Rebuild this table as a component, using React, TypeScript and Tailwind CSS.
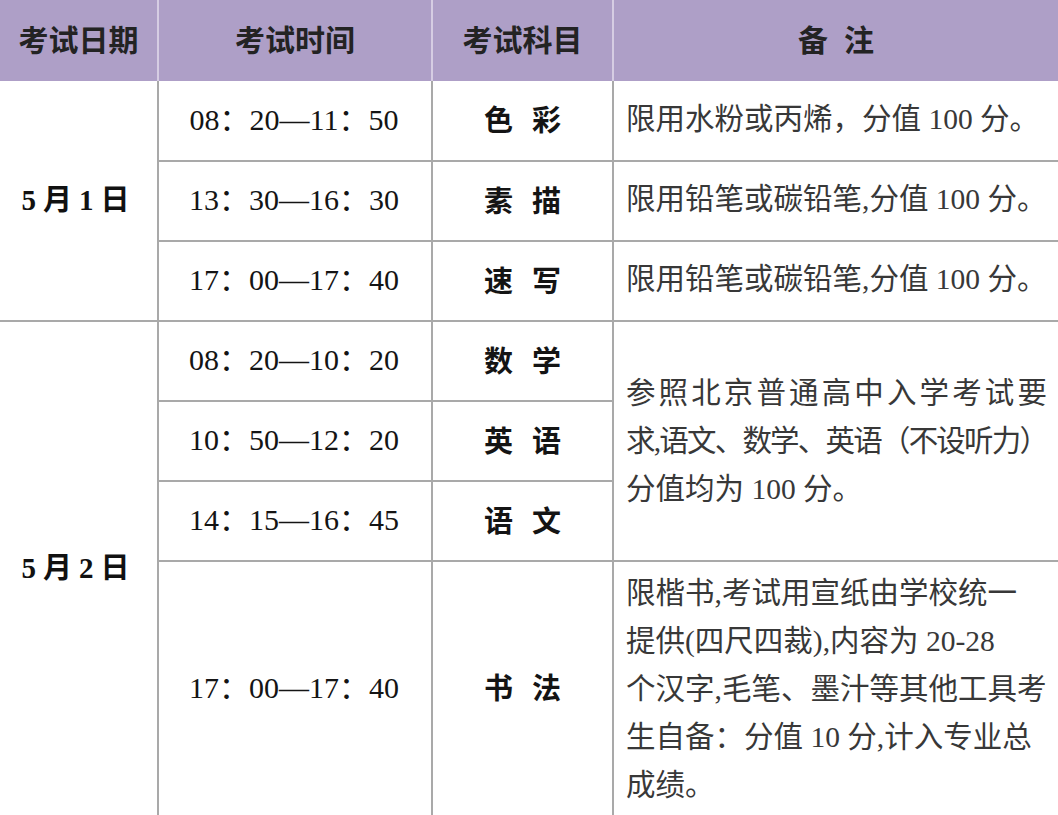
import React from 'react';

const serif = "font-['Liberation_Serif','Noto_Sans_CJK_SC',serif]";
const sans = "font-['Noto_Sans_CJK_SC',sans-serif]";

const line = 'border-[#a9a9a9]';

interface Slot {
    time: string;
    subject: [string, string];
}

const slots: Slot[] = [
    { time: '08：20—11：50', subject: ['色', '彩'] },
    { time: '13：30—16：30', subject: ['素', '描'] },
    { time: '17：00—17：40', subject: ['速', '写'] },
    { time: '08：20—10：20', subject: ['数', '学'] },
    { time: '10：50—12：20', subject: ['英', '语'] },
    { time: '14：15—16：45', subject: ['语', '文'] },
    { time: '17：00—17：40', subject: ['书', '法'] },
];

const rowStart = ['row-start-2', 'row-start-3', 'row-start-4', 'row-start-5', 'row-start-6', 'row-start-7', 'row-start-8'];

const Header: React.FC<{ col: string; last?: boolean; children: React.ReactNode }> = ({ col, last, children }) => (
    <div
        className={`${col} row-start-1 flex items-center justify-center bg-[#ae9fc7] pb-[4px] text-[30px] font-bold text-[#232323] ${sans} ${
            last ? '' : 'border-r-2 border-[#d6cde3]'
        }`}
    >
        {children}
    </div>
);

const Note: React.FC<{ lines: string[]; justify?: boolean[]; tight?: boolean[] }> = ({ lines, justify = [], tight = [] }) => (
    <div className="w-[421px]">
        {lines.map((l, i) => (
            <div
                key={i}
                className={`whitespace-nowrap leading-[48px] ${justify[i] ? 'text-justify [text-align-last:justify]' : ''} ${
                    tight[i] ? 'tracking-[-2px]' : ''
                }`}
            >
                {l}
            </div>
        ))}
    </div>
);

const DateCell: React.FC<{ day: string; className: string }> = ({ day, className }) => (
    <div
        className={`col-start-1 ${className} flex items-center justify-center border-r-2 ${line} pr-[6px] text-[29px] font-bold text-[#111] ${serif}`}
    >
        <span className="flex items-baseline gap-[7px]">
            <span>5</span>
            <span>月</span>
            <span>{day}</span>
            <span>日</span>
        </span>
    </div>
);

export default function App() {
    return (
        <div className="h-[815px] w-[1058px] overflow-hidden bg-white">
            <div className="grid h-full grid-cols-[159px_274px_181px_1fr] grid-rows-[81px_81px_80px_80px_80px_80px_80px_253px]">
                <Header col="col-start-1">考试日期</Header>
                <Header col="col-start-2">考试时间</Header>
                <Header col="col-start-3">考试科目</Header>
                <Header col="col-start-4" last>
                    <span className="flex gap-[16px]">
                        <span>备</span>
                        <span>注</span>
                    </span>
                </Header>

                {/* date column */}
                <DateCell day="1" className="row-start-2 row-span-3 border-b-2" />
                <DateCell day="2" className="row-start-5 row-span-4" />

                {/* time + subject */}
                {slots.map((s, i) => (
                    <React.Fragment key={i}>
                        <div
                            className={`col-start-2 ${rowStart[i]} flex items-center justify-center border-r-2 ${line} ${
                                i < 6 ? 'border-b-2' : ''
                            } pr-[2px] pb-[3px] text-[30px] text-[#141414] ${serif}`}
                        >
                            {s.time}
                        </div>
                        <div
                            className={`col-start-3 ${rowStart[i]} flex items-center justify-center border-r-2 ${line} ${
                                i < 6 ? 'border-b-2' : ''
                            } pb-[3px] text-[29px] font-bold text-[#141414] ${sans}`}
                        >
                            <span className="flex gap-[19px]">
                                <span>{s.subject[0]}</span>
                                <span>{s.subject[1]}</span>
                            </span>
                        </div>
                    </React.Fragment>
                ))}

                {/* notes */}
                <div className={`col-start-4 row-start-2 flex items-center border-b-2 ${line} pl-[12px] pb-[3px] text-[29.5px] text-[#383838] ${serif}`}>
                    限用水粉或丙烯，分值 100 分。
                </div>
                <div className={`col-start-4 row-start-3 flex items-center border-b-2 ${line} pl-[12px] pb-[3px] text-[29.5px] text-[#383838] ${serif}`}>
                    限用铅笔或碳铅笔,分值 100 分。
                </div>
                <div className={`col-start-4 row-start-4 flex items-center border-b-2 ${line} pl-[12px] pb-[3px] text-[29.5px] text-[#383838] ${serif}`}>
                    限用铅笔或碳铅笔,分值 100 分。
                </div>
                <div
                    className={`col-start-4 row-start-5 row-span-3 flex items-center border-b-2 ${line} pl-[12px] text-[29.5px] text-[#383838] ${serif}`}
                >
                    <Note
                        lines={['参照北京普通高中入学考试要', '求,语文、数学、英语（不设听力）', '分值均为 100 分。']}
                        justify={[true, true, false]}
                        tight={[false, true, false]}
                    />
                </div>
                <div className={`col-start-4 row-start-8 flex items-center pl-[12px] text-[29.5px] text-[#383838] ${serif}`}>
                    <Note
                        lines={[
                            '限楷书,考试用宣纸由学校统一',
                            '提供(四尺四裁),内容为 20-28',
                            '个汉字,毛笔、墨汁等其他工具考',
                            '生自备：分值 10 分,计入专业总',
                            '成绩。',
                        ]}
                    />
                </div>
            </div>
        </div>
    );
}
